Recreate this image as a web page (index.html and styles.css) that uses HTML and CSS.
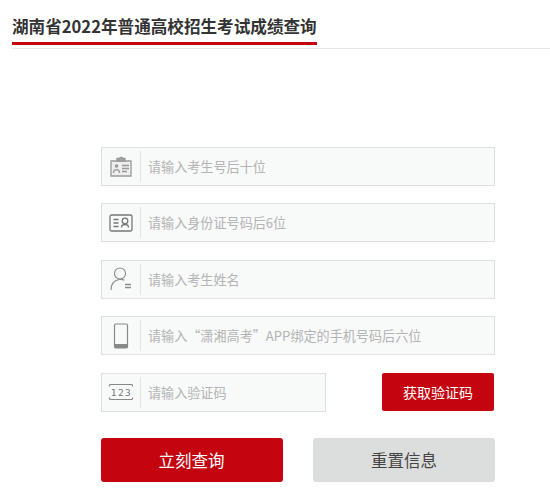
FILE: index.html
```html
<!DOCTYPE html>
<html lang="zh-CN">
<head>
    <meta charset="UTF-8">
    <meta name="viewport" content="width=device-width, initial-scale=1.0">
    <title>湖南省2022年普通高校招生考试成绩查询</title>
    <link rel="stylesheet" href="styles.css">
</head>
<body>
    <header class="page-head">
        <h1 class="page-title">湖南省2022年普通高校招生考试成绩查询</h1>
    </header>

    <form class="query-form">
        <div class="field">
            <span class="field-icon">
                <svg width="26" height="24" viewBox="0 0 26 24" fill="none" stroke="#999" stroke-width="1.300">
                    <path d="M3 7h20v15H3z" fill="#eee"/>
                    <path d="M9 7V4.500h2.500a2 2 0 0 1 3.500 0H17V7z" fill="#a5a5a5"/>
                    <circle cx="8.500" cy="12" r="1.800" fill="#999" stroke="none"/>
                    <path d="M5.500 19c0-4.500 6-4.500 6 0M14 11.500h7M14 14.500h7M14 17.500h5"/>
                </svg>
            </span>
            <input class="field-input" type="text" placeholder="请输入考生号后十位">
        </div>

        <div class="field">
            <span class="field-icon">
                <svg width="24" height="18" viewBox="0 0 24 18" fill="none" stroke="#777" stroke-width="1.300">
                    <rect x="1" y="1" width="22" height="16" rx="1.500"/>
                    <path d="M4.500 5.500h5M4.500 9h5M4.500 12.500h5"/>
                    <circle cx="16" cy="7" r="2.800"/>
                    <path d="M12.500 13.500c0-4 7-4 7 0"/>
                </svg>
            </span>
            <input class="field-input" type="text" placeholder="请输入身份证号码后6位">
        </div>

        <div class="field">
            <span class="field-icon">
                <svg width="24" height="26" viewBox="0 0 24 26" fill="none" stroke="#8c8c8c" stroke-width="1.100">
                    <circle cx="11" cy="7.500" r="5.500"/>
                    <path d="M2 24c0-6 3-9.500 8-10.500 2-.3 4 0 5.500.8"/>
                    <path d="M16 18.500h6M16 21.500h6" stroke-width="1.400"/>
                </svg>
            </span>
            <input class="field-input" type="text" placeholder="请输入考生姓名">
        </div>

        <div class="field">
            <span class="field-icon">
                <svg width="16" height="26" viewBox="0 0 16 26" fill="none" stroke="#888" stroke-width="1.200">
                    <rect x="1.500" y="1" width="13" height="24" rx="1.500"/>
                    <path d="M2 21.500h12v3H2z" fill="#888"/>
                </svg>
            </span>
            <input class="field-input" type="text" placeholder="请输入“潇湘高考”APP绑定的手机号码后六位">
        </div>

        <div class="code-row">
            <div class="field field-code">
                <span class="field-icon">
                    <svg width="26" height="18" viewBox="0 0 26 18" fill="none" stroke="#888" stroke-width="1.200">
                        <path d="M1.500 3.500V2.500a1 1 0 0 1 1-1h21a1 1 0 0 1 1 1v1M1.500 14.500v1a1 1 0 0 0 1 1h21a1 1 0 0 0 1-1v-1"/>
                        <text class="code-digits" x="13.500" y="12.500" text-anchor="middle">123</text>
                    </svg>
                </span>
                <input class="field-input" type="text" placeholder="请输入验证码">
            </div>
            <button class="btn-code" type="button">获取验证码</button>
        </div>

        <div class="actions">
            <button class="btn btn-submit" type="button">立刻查询</button>
            <button class="btn btn-reset" type="reset">重置信息</button>
        </div>
    </form>
</body>
</html>
```

FILE: styles.css
```css
body {
    margin: 0;
    font-family: "Liberation Sans", "Noto Sans CJK SC", sans-serif;
    background-color: #fff;
}
.page-head {
    margin-left: 12px;
    height: 49px;
    border-bottom: 1px solid #e8e8e8;
    box-sizing: border-box;
}
.page-title {
    display: inline-block;
    margin: 0;
    height: 45px;
    box-sizing: border-box;
    padding-top: 14px;
    font-family: "Noto Sans CJK SC", sans-serif;
    font-size: 16.600px;
    line-height: 24px;
    font-weight: 700;
    color: #333;
    border-bottom: 3px solid #c40510;
}
.query-form {
    width: 394px;
    margin: 97.900px 0 0 101px;
}
.field {
    display: flex;
    align-items: center;
    height: 39px;
    margin-bottom: 17.500px;
    box-sizing: border-box;
    background-color: #f8f9f9;
    border: 1px solid #dfe1e1;
}
.field-icon {
    display: flex;
    align-items: center;
    justify-content: center;
    flex: none;
    width: 38px;
    height: 31px;
    border-right: 1px solid #e3e4e4;
}
.code-digits {
    font-family: "DejaVu Sans Mono", monospace;
    font-size: 9.500px;
    letter-spacing: 1.500px;
    fill: #777;
    stroke: none;
}
.field-input {
    flex: 1;
    min-width: 0;
    height: 100%;
    padding: 0 0 0 7px;
    border: none;
    outline: none;
    background: transparent;
    font-family: "Noto Sans CJK SC", sans-serif;
    font-size: 13.100px;
}
.field-input::placeholder {
    color: #b4b4b4;
    opacity: 1;
}
.code-row {
    display: flex;
    justify-content: space-between;
    align-items: flex-start;
}
.field-code {
    width: 225px;
    margin-bottom: 0;
}
.btn-code {
    width: 112px;
    height: 38px;
    margin-right: 1px;
    border: none;
    border-radius: 2px;
    background-color: #c40510;
    color: #fff;
    font-family: "Noto Sans CJK SC", sans-serif;
    font-size: 14px;
    cursor: pointer;
}
.actions {
    display: flex;
    justify-content: space-between;
    margin-top: 26px;
}
.btn {
    width: 182px;
    height: 44px;
    border: none;
    border-radius: 3px;
    font-family: "Noto Sans CJK SC", sans-serif;
    font-size: 16.500px;
    cursor: pointer;
}
.btn-submit {
    padding-right: 7px;
    background-color: #c40510;
    color: #fff;
}
.btn-reset {
    background-color: #dcdddd;
    color: #444;
}
```
